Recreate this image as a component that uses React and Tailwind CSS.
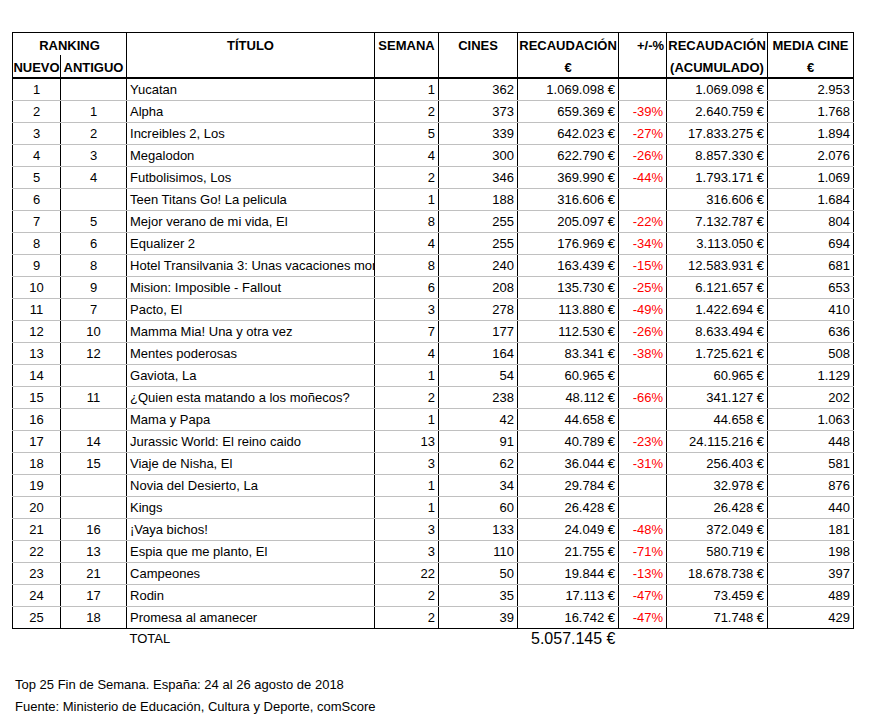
const rows = [
  ["1", "", "Yucatan", "1", "362", "1.069.098 €", "", "1.069.098 €", "2.953"],
  ["2", "1", "Alpha", "2", "373", "659.369 €", "-39%", "2.640.759 €", "1.768"],
  ["3", "2", "Increibles 2, Los", "5", "339", "642.023 €", "-27%", "17.833.275 €", "1.894"],
  ["4", "3", "Megalodon", "4", "300", "622.790 €", "-26%", "8.857.330 €", "2.076"],
  ["5", "4", "Futbolisimos, Los", "2", "346", "369.990 €", "-44%", "1.793.171 €", "1.069"],
  ["6", "", "Teen Titans Go! La pelicula", "1", "188", "316.606 €", "", "316.606 €", "1.684"],
  ["7", "5", "Mejor verano de mi vida, El", "8", "255", "205.097 €", "-22%", "7.132.787 €", "804"],
  ["8", "6", "Equalizer 2", "4", "255", "176.969 €", "-34%", "3.113.050 €", "694"],
  ["9", "8", "Hotel Transilvania 3: Unas vacaciones monstruosas", "8", "240", "163.439 €", "-15%", "12.583.931 €", "681"],
  ["10", "9", "Mision: Imposible - Fallout", "6", "208", "135.730 €", "-25%", "6.121.657 €", "653"],
  ["11", "7", "Pacto, El", "3", "278", "113.880 €", "-49%", "1.422.694 €", "410"],
  ["12", "10", "Mamma Mia! Una y otra vez", "7", "177", "112.530 €", "-26%", "8.633.494 €", "636"],
  ["13", "12", "Mentes poderosas", "4", "164", "83.341 €", "-38%", "1.725.621 €", "508"],
  ["14", "", "Gaviota, La", "1", "54", "60.965 €", "", "60.965 €", "1.129"],
  ["15", "11", "¿Quien esta matando a los moñecos?", "2", "238", "48.112 €", "-66%", "341.127 €", "202"],
  ["16", "", "Mama y Papa", "1", "42", "44.658 €", "", "44.658 €", "1.063"],
  ["17", "14", "Jurassic World: El reino caido", "13", "91", "40.789 €", "-23%", "24.115.216 €", "448"],
  ["18", "15", "Viaje de Nisha, El", "3", "62", "36.044 €", "-31%", "256.403 €", "581"],
  ["19", "", "Novia del Desierto, La", "1", "34", "29.784 €", "", "32.978 €", "876"],
  ["20", "", "Kings", "1", "60", "26.428 €", "", "26.428 €", "440"],
  ["21", "16", "¡Vaya bichos!", "3", "133", "24.049 €", "-48%", "372.049 €", "181"],
  ["22", "13", "Espia que me planto, El", "3", "110", "21.755 €", "-71%", "580.719 €", "198"],
  ["23", "21", "Campeones", "22", "50", "19.844 €", "-13%", "18.678.738 €", "397"],
  ["24", "17", "Rodin", "2", "35", "17.113 €", "-47%", "73.459 €", "489"],
  ["25", "18", "Promesa al amanecer", "2", "39", "16.742 €", "-47%", "71.748 €", "429"],
];

const widths = [48, 66, 248, 64, 79, 101, 48, 101, 86];

function App() {
  const td = "h-[22px] p-0 border-x border-black border-b border-b-[#c0c0c0] leading-[21px]";
  const th = "p-0 border-x border-black border-t border-t-black font-bold align-top leading-[22px]";
  const thTall = th + " border-b-2 border-b-black";

  return (
    <div className="w-[880px] h-[721px] bg-white text-black font-['Liberation_Sans',Arial,sans-serif] text-[13px] overflow-hidden">
      <div className="pt-[32px] pl-[12px]">
        <table className="table-fixed border-collapse w-[842px]">
          <colgroup>
            {widths.map((w, i) => (
              <col key={i} style={{ width: w }} />
            ))}
          </colgroup>
          <thead>
            <tr className="h-[22px]">
              <th colSpan={2} className={th + " text-center"}>
                <div className="relative top-[2px]">RANKING</div>
              </th>
              <th rowSpan={2} className={thTall + " text-center"}>
                <div className="relative top-[2px]">TÍTULO</div>
              </th>
              <th rowSpan={2} className={thTall + " text-center"}>
                <div className="relative top-[2px]">SEMANA</div>
              </th>
              <th rowSpan={2} className={thTall + " text-center"}>
                <div className="relative top-[2px]">CINES</div>
              </th>
              <th rowSpan={2} className={thTall + " text-center"}>
                <div className="relative top-[2px]">
                  <div>RECAUDACIÓN</div>
                  <div>€</div>
                </div>
              </th>
              <th rowSpan={2} className={thTall + " text-right pr-[2px]"}>
                <div className="relative top-[2px]">+/-%</div>
              </th>
              <th rowSpan={2} className={thTall + " text-center"}>
                <div className="relative top-[2px]">
                  <div>RECAUDACIÓN</div>
                  <div>(ACUMULADO)</div>
                </div>
              </th>
              <th rowSpan={2} className={thTall + " text-center"}>
                <div className="relative top-[2px]">
                  <div>MEDIA CINE</div>
                  <div>€</div>
                </div>
              </th>
            </tr>
            <tr className="h-[22px]">
              <th className="p-0 border-x border-black border-b-2 border-b-black font-bold leading-[22px] text-center">
                <div className="relative top-[2px]">NUEVO</div>
              </th>
              <th className="p-0 border-x border-black border-b-2 border-b-black font-bold leading-[22px] text-center">
                <div className="relative top-[2px]">ANTIGUO</div>
              </th>
            </tr>
          </thead>
          <tbody>
            {rows.map((r, i) => {
              const last = i === rows.length - 1;
              const cls = last ? td + " border-b-black" : td;
              return (
                <tr key={r[0]}>
                  <td className={cls + " text-center"}>{r[0]}</td>
                  <td className={cls + " text-center"}>{r[1]}</td>
                  <td className={cls + " pl-[3px] whitespace-nowrap overflow-hidden"}>{r[2]}</td>
                  <td className={cls + " text-right pr-[3px]"}>{r[3]}</td>
                  <td className={cls + " text-right pr-[3px]"}>{r[4]}</td>
                  <td className={cls + " text-right pr-[3px] whitespace-nowrap"}>{r[5]}</td>
                  <td className={cls + " text-right pr-[3px] text-[#ff0000]"}>{r[6]}</td>
                  <td className={cls + " text-right pr-[3px] whitespace-nowrap"}>{r[7]}</td>
                  <td className={cls + " text-right pr-[3px]"}>{r[8]}</td>
                </tr>
              );
            })}
            <tr className="h-[20px]">
              <td />
              <td />
              <td className="p-0 pl-[3px] leading-[20px]">TOTAL</td>
              <td />
              <td />
              <td className="p-0 pr-[3px] text-right text-[16px] leading-[20px] whitespace-nowrap">5.057.145 €</td>
              <td />
              <td />
              <td />
            </tr>
          </tbody>
        </table>
      </div>
      <div className="pl-[15px] pt-[25px] leading-[22px]">
        <div>Top 25 Fin de Semana. España: 24 al 26 agosto de 2018</div>
        <div>Fuente: Ministerio de Educación, Cultura y Deporte, comScore</div>
      </div>
      <div className="flex mt-[3px]">
        <div className="w-[47px] h-px bg-[#b4b4b4]" />
        <div className="w-[108px]" />
        <div className="flex-1 h-px bg-[#b4b4b4]" />
      </div>
    </div>
  );
}

export default App;
